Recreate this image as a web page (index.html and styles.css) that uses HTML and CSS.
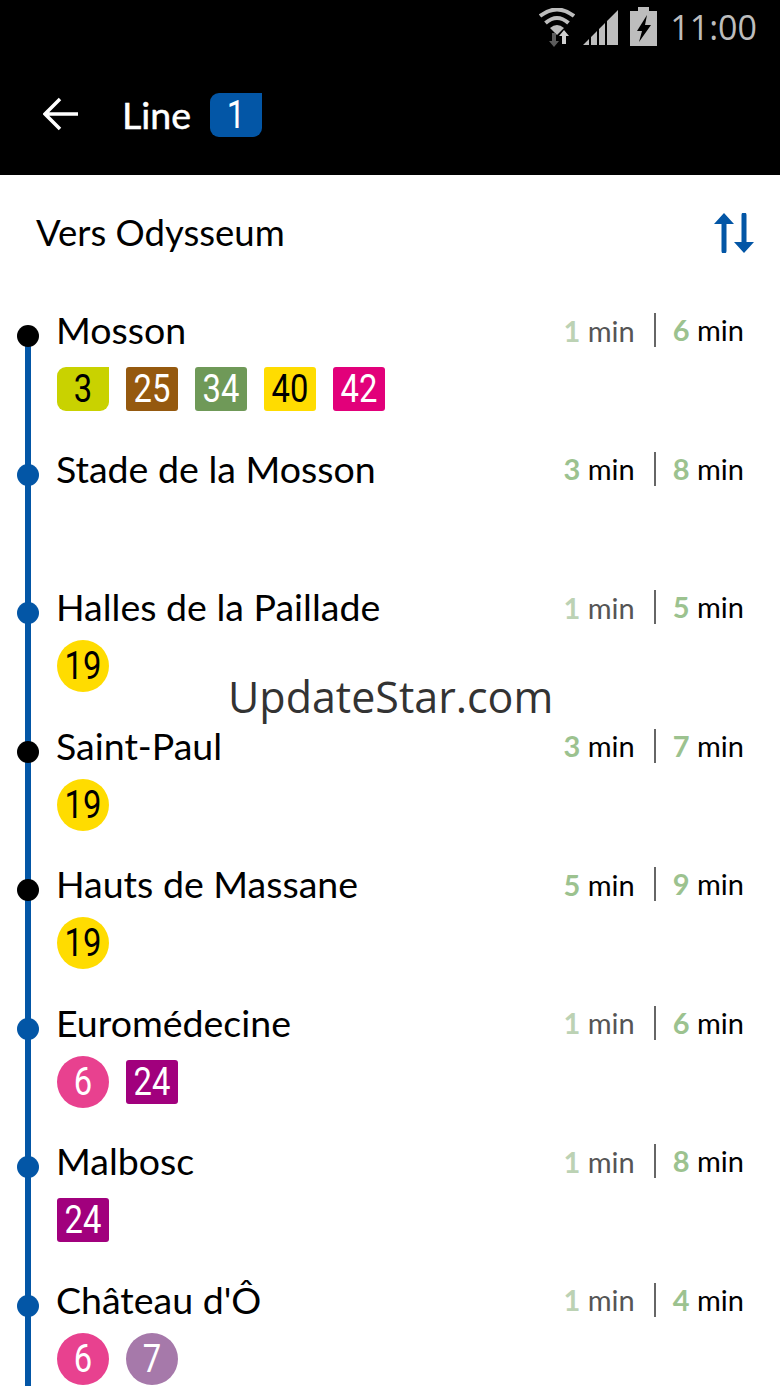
FILE: index.html
```html
<!DOCTYPE html>
<html lang="en">
<head>
    <meta charset="UTF-8">
    <meta name="viewport" content="width=device-width, initial-scale=1.0">
    <title>Line 1</title>
    <link rel="stylesheet" href="styles.css">
</head>
<body>
    <div class="header">
        <div class="status">
            <svg class="ico-wifi" width="36" height="39" viewBox="0 0 36 39">
                <path d="M1 8 Q18 -5 35 8" fill="none" stroke="#bdbdbd" stroke-width="4"/>
                <path d="M6.500 15 Q18 5 29.500 15" fill="none" stroke="#bdbdbd" stroke-width="4"/>
                <path d="M11 20 Q18 14 25 20 L18 27 Z" fill="#bdbdbd"/>
                <path d="M23 36 V28 H20 L25 22 L30 28 H27 V36 Z" fill="#d0d0d0"/>
                <path d="M15 39 L20 33 H17 V25 H13 V33 H10 Z" fill="#5c5c5c"/>
            </svg>
            <svg class="ico-signal" width="35" height="35" viewBox="0 0 35 35">
                <path d="M0 35 L6 29 V35 Z M8 35 V27 L14 21 V35 Z M16 35 V19 L22 13 V35 Z M24 35 V11 L35 0 V35 Z" fill="#bdbdbd"/>
            </svg>
            <svg class="ico-battery" width="27" height="39" viewBox="0 0 27 39">
                <path d="M8 0 H19 V4 H27 V39 H0 V4 H8 Z M17 8 L7 24 H12 L9 35 L21 18 H15 Z" fill="#bdbdbd" fill-rule="evenodd"/>
            </svg>
            <span class="clock">11:00</span>
        </div>
        <div class="toolbar">
            <svg class="ico-back" width="36" height="36" viewBox="0 0 36 36">
                <path d="M17 2 L2 17 L17 32 M2 17 H35" fill="none" stroke="#fff" stroke-width="3.500"/>
            </svg>
            <span class="toolbar-title">Line</span>
            <span class="badge badge-line"><span class="num">1</span></span>
        </div>
    </div>

    <div class="direction">
        <span class="direction-name">Vers Odysseum</span>
        <svg width="40" height="40" viewBox="0 0 40 40">
            <path d="M10 38 V8 M30 2 V32" fill="none" stroke="#0356a6" stroke-width="5" stroke-linecap="round"/>
            <path d="M0 11 L10 0 L20 11 Z M20 29 H40 L30 40 Z" fill="#0356a6"/>
        </svg>
    </div>

    <div class="stops">
        <div class="stop terminus">
            <div class="stop-top">
                <span class="stop-name">Mosson</span>
                <div class="times"><span class="time first"><b>1</b> min</span><span class="time second"><b>6</b> min</span></div>
            </div>
            <div class="badges">
                <span class="badge lime"><span class="num">3</span></span>
                <span class="badge rect brown"><span class="num">25</span></span>
                <span class="badge rect green"><span class="num">34</span></span>
                <span class="badge rect yellow"><span class="num">40</span></span>
                <span class="badge rect pink"><span class="num">42</span></span>
            </div>
        </div>
        <div class="stop">
            <div class="stop-top">
                <span class="stop-name">Stade de la Mosson</span>
                <div class="times"><span class="time"><b>3</b> min</span><span class="time second"><b>8</b> min</span></div>
            </div>
        </div>
        <div class="stop">
            <div class="stop-top">
                <span class="stop-name">Halles de la Paillade</span>
                <div class="times"><span class="time first"><b>1</b> min</span><span class="time second"><b>5</b> min</span></div>
            </div>
            <div class="badges">
                <span class="badge round yellow"><span class="num">19</span></span>
            </div>
        </div>
        <div class="stop terminus">
            <div class="stop-top">
                <span class="stop-name">Saint-Paul</span>
                <div class="times"><span class="time"><b>3</b> min</span><span class="time second"><b>7</b> min</span></div>
            </div>
            <div class="badges">
                <span class="badge round yellow"><span class="num">19</span></span>
            </div>
        </div>
        <div class="stop terminus">
            <div class="stop-top">
                <span class="stop-name">Hauts de Massane</span>
                <div class="times"><span class="time"><b>5</b> min</span><span class="time second"><b>9</b> min</span></div>
            </div>
            <div class="badges">
                <span class="badge round yellow"><span class="num">19</span></span>
            </div>
        </div>
        <div class="stop">
            <div class="stop-top">
                <span class="stop-name">Euromédecine</span>
                <div class="times"><span class="time first"><b>1</b> min</span><span class="time second"><b>6</b> min</span></div>
            </div>
            <div class="badges">
                <span class="badge round rose"><span class="num">6</span></span>
                <span class="badge rect purple"><span class="num">24</span></span>
            </div>
        </div>
        <div class="stop">
            <div class="stop-top">
                <span class="stop-name">Malbosc</span>
                <div class="times"><span class="time first"><b>1</b> min</span><span class="time second"><b>8</b> min</span></div>
            </div>
            <div class="badges">
                <span class="badge rect purple"><span class="num">24</span></span>
            </div>
        </div>
        <div class="stop">
            <div class="stop-top">
                <span class="stop-name">Château d'Ô</span>
                <div class="times"><span class="time first"><b>1</b> min</span><span class="time second"><b>4</b> min</span></div>
            </div>
            <div class="badges">
                <span class="badge round rose"><span class="num">6</span></span>
                <span class="badge round mauve"><span class="num">7</span></span>
            </div>
        </div>
    </div>

    <div class="watermark">UpdateStar.com</div>
</body>
</html>
```

FILE: styles.css
```css
html, body {
    height: 100%;
}
body {
    margin: 0;
    background: #fff;
    color: #000;
    font-family: "Lato", "Noto Sans", sans-serif;
    overflow: hidden;
    position: relative;
}
.header {
    background: #000;
    height: 175px;
    color: #fff;
}
.status {
    height: 50px;
    display: flex;
    justify-content: flex-end;
    align-items: flex-start;
    padding: 8px 23px 0 0;
    box-sizing: border-box;
}
.ico-wifi {
    margin-right: 8px;
}
.ico-signal {
    margin: 2px 12px 0 0;
}
.ico-battery {
    margin: -1px 13px 0 0;
}
.clock {
    color: #bdbdbd;
    font-family: "Open Sans", sans-serif;
    font-size: 34px;
    line-height: 42px;
    margin-top: -2px;
}
.toolbar {
    display: flex;
    align-items: center;
    height: 44px;
    margin-top: 43px;
    padding-left: 43px;
}
.ico-back {
    margin-right: 43px;
}
.toolbar-title {
    font-size: 37.500px;
    margin-right: 19px;
    padding-bottom: 2px;
    -webkit-text-stroke: 0.500px #fff;
}
.direction {
    display: flex;
    justify-content: space-between;
    align-items: center;
    height: 116px;
    padding: 0 26px 0 36px;
}
.direction-name {
    font-size: 36.500px;
    padding-bottom: 2px;
}
.stops {
    position: relative;
    height: 1095px;
    padding-top: 8px;
    box-sizing: border-box;
    overflow: hidden;
}
.stops::before {
    content: "";
    position: absolute;
    left: 25px;
    top: 45px;
    bottom: 0;
    width: 6px;
    background: #0356a6;
}
.stop {
    position: relative;
    height: 138.500px;
    padding: 9px 36px 0 57px;
    box-sizing: border-box;
}
.stop::before {
    content: "";
    position: absolute;
    left: 17px;
    top: 26px;
    width: 22px;
    height: 22px;
    border-radius: 50%;
    background: #0356a6;
}
.stop.terminus::before {
    background: #000;
}
.stop-top {
    display: flex;
    justify-content: space-between;
    align-items: center;
    height: 44px;
}
.stop-name {
    font-size: 37.500px;
    line-height: 44px;
    margin-left: -1px;
}
.times {
    display: flex;
    align-items: center;
    font-size: 29px;
}
.time {
    color: #000;
}
.time b {
    color: #9cc28f;
}
.first {
    color: #555;
}
.first b {
    color: #bcd2b4;
}
.second {
    border-left: 2px solid #666;
    margin-left: 19px;
    padding-left: 17px;
    line-height: 34px;
}
.badges {
    display: flex;
    align-items: center;
    gap: 17px;
    height: 52px;
    margin-top: 11px;
}
.badge {
    display: flex;
    justify-content: center;
    align-items: center;
    width: 52px;
    height: 44px;
    font-family: "Roboto", sans-serif;
    font-size: 39px;
    border-radius: 9px 0 9px 9px;
}
.num {
    transform: scaleX(0.840);
}
.badge.rect {
    border-radius: 3px;
}
.badge.round {
    height: 52px;
    border-radius: 50%;
}
.badge-line {
    background: #0356a6;
    color: #fff;
}
.lime {
    background: #c9d200;
    color: #000;
}
.brown {
    background: #95590f;
    color: #fff;
}
.green {
    background: #6f9958;
    color: #fff;
}
.yellow {
    background: #ffdc00;
    color: #000;
}
.pink {
    background: #e2007a;
    color: #fff;
}
.rose {
    background: #e8418f;
    color: #fff;
}
.purple {
    background: #a1007d;
    color: #fff;
}
.mauve {
    background: #a679aa;
    color: #fff;
}
.watermark {
    position: absolute;
    left: 228px;
    top: 668px;
    color: #333;
    font-family: "Open Sans", sans-serif;
    font-size: 43px;
    line-height: 58px;
}
```
